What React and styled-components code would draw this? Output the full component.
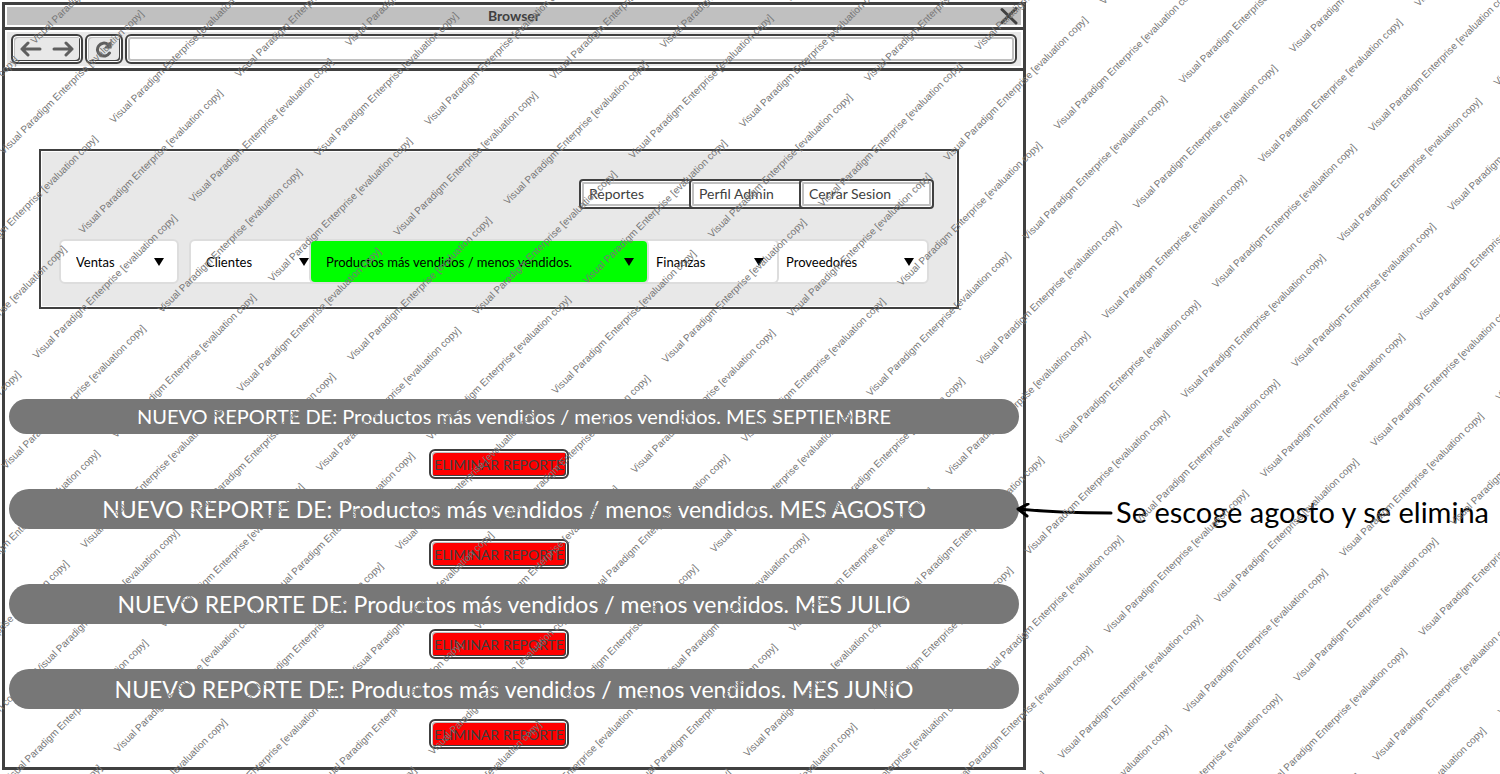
import React from 'react';
import styled, { createGlobalStyle } from 'styled-components';

const ink = '#404040';
const silver = '#c0c0c0';
const panelGrey = '#e8e8e8';
const barGrey = '#777777';
const hand = '"Comic Sans MS", Lato, sans-serif';

const GlobalStyle = createGlobalStyle`
  *, *::before, *::after { box-sizing: border-box; }
  body { margin: 0; background: #fff; font-family: ${hand}; }
`;

const Page = styled.div`
  position: relative;
  overflow: hidden;
  min-height: 100vh;
  padding: 2px 474px 4px 2px;
`;

const BrowserWindow = styled.main`
  border: 3px solid ${ink};
  background: #fff;
`;

const TitleBar = styled.header`
  padding: 2px;
  border-bottom: 3px solid ${ink};
`;

const TitleFill = styled.div`
  display: grid;
  grid-template-columns: 24px 1fr 24px;
  align-items: center;
  height: 18px;
  background: ${silver};
`;

const WindowTitle = styled.h1`
  grid-column: 2;
  margin: 0;
  font-size: 14px;
  line-height: 18px;
  font-weight: 700;
  text-align: center;
  color: ${ink};
`;

const CloseButton = styled.button`
  display: flex;
  justify-content: center;
  padding: 0;
  border: 0;
  background: none;
`;

const Toolbar = styled.div`
  padding: 2px;
  border-bottom: 3px solid ${ink};
`;

const ToolbarFill = styled.div`
  display: flex;
  gap: 2px;
  padding: 2px 4px;
  background: ${panelGrey};
`;

const ToolGroup = styled.div`
  display: flex;
  align-items: center;
  justify-content: center;
  width: ${(p) => p.$width}px;
  height: 30px;
  border: 2px solid ${ink};
  border-radius: 6px;
  background: ${panelGrey};
  box-shadow: inset 0 0 0 1px #fff, inset 2px 2px 0 ${silver}, inset -2px -2px 0 ${ink};
`;

const ToolButton = styled.button`
  display: flex;
  justify-content: center;
  width: 32px;
  padding: 0;
  border: 0;
  background: none;
`;

const Address = styled.input`
  flex: 1;
  min-width: 0;
  height: 30px;
  padding: 0 10px;
  border: 2px solid ${ink};
  border-radius: 6px;
  background: #fff;
  box-shadow: inset 0 0 0 1px #fff, inset 0 0 0 3px ${silver};
  font: 14px ${hand};
`;

const Content = styled.div`
  padding: 78px 4px 18px;
`;

const MenuPanel = styled.section`
  display: flex;
  flex-direction: column;
  gap: 30px;
  margin: 0 60px 90px 30px;
  padding: 28px 23px 23px 18px;
  border: 2px solid ${ink};
  background: ${panelGrey};
  box-shadow: inset 0 0 0 1px #fff;
`;

const AccountNav = styled.nav`
  display: flex;
  justify-content: flex-end;
`;

const AccountButton = styled.button`
  width: 135px;
  height: 30px;
  padding: 0 8px 2px;
  border: 2px solid ${ink};
  border-radius: 4px;
  background: #fff;
  box-shadow: inset 0 0 0 1px #fff, inset 0 0 0 3px ${silver};
  font: 14px ${hand};
  text-align: left;
  color: ${ink};

  & + & { margin-left: -25px; }
`;

const Filters = styled.div`
  display: flex;
`;

const FilterBox = styled.div`
  position: relative;
  z-index: ${(p) => p.$layer};
  flex: 0 1 ${(p) => p.$width}px;
  margin-right: ${(p) => p.$after}px;
`;

const FilterSelect = styled.select`
  appearance: none;
  display: block;
  width: 100%;
  height: 45px;
  padding: 0 20px 0 15px;
  border: 2px solid #dddddd;
  border-radius: 6px;
  background: ${(p) => (p.$active ? '#00ff00' : '#fff')};
  font: 13px ${hand};
  color: #000;
`;

const FilterArrow = styled.svg`
  position: absolute;
  top: 19px;
  right: 15px;
  pointer-events: none;
`;

const Report = styled.article`
  position: relative;
  display: flex;
  flex-direction: column;
  align-items: center;
  gap: ${(p) => p.$gap}px;
  margin-bottom: ${(p) => p.$after}px;
`;

const ReportTitle = styled.h2`
  width: 100%;
  margin: 0;
  border-radius: 20px;
  background: ${barGrey};
  font-size: ${(p) => (p.$compact ? 20 : 23)}px;
  line-height: ${(p) => (p.$compact ? 35 : 40)}px;
  font-weight: 400;
  text-align: center;
  color: #fff;
`;

const DeleteButton = styled.button`
  width: 140px;
  height: 30px;
  margin-right: 30px;
  padding: 0;
  border: 2px solid ${ink};
  border-radius: 6px;
  background: #ff0000;
  box-shadow: inset 0 0 0 1px #fff, inset 2px 2px 0 ${silver}, inset -2px -2px 0 ${ink};
  font: 14px ${hand};
  white-space: nowrap;
  color: ${ink};
`;

const Note = styled.aside`
  position: absolute;
  top: 3px;
  left: 100%;
  display: flex;
  align-items: center;
  gap: 3px;
  margin-left: -4px;
  font-size: 29px;
  line-height: 40px;
  white-space: nowrap;
  color: #000;
`;

const WatermarkLayer = styled.svg`
  position: absolute;
  inset: 0;
  width: 100%;
  height: 100%;
  pointer-events: none;
  z-index: 10;
  fill: ${barGrey};
  font: 10px "Liberation Sans", Arial, sans-serif;
`;

const filters = [
  { label: 'Ventas', width: 120, after: 10, layer: 1 },
  { label: 'Clientes', width: 135, after: -15, layer: 1 },
  { label: 'Productos más vendidos / menos vendidos.', width: 340, after: -10, layer: 3, active: true },
  { label: 'Finanzas', width: 140, after: -10, layer: 2 },
  { label: 'Proveedores', width: 160, after: 0, layer: 1 },
];

const reports = [
  { month: 'SEPTIEMBRE', compact: true, gap: 15, after: 10 },
  { month: 'AGOSTO', gap: 10, after: 15, note: 'Se escoge agosto y se elimina' },
  { month: 'JULIO', gap: 5, after: 10 },
  { month: 'JUNIO', gap: 10, after: 0 },
];

function Watermark() {
  const marks = [];
  for (let row = 0; row < 30; row += 1) {
    const start = row % 2 ? 214 : 335;
    for (let col = -4; col < 4; col += 1) {
      const u = start + col * 221;
      const v = row * 56;
      const x = (u + v) * Math.SQRT1_2;
      const y = (v - u) * Math.SQRT1_2;
      if (x > -150 && x < 1510 && y > -5 && y < 930) {
        marks.push(
          <text key={`${row}:${col}`} x={u} y={v}>Visual Paradigm Enterprise [evaluation copy]</text>
        );
      }
    }
  }
  return (
    <WatermarkLayer aria-hidden="true">
      <g transform="rotate(-45)">{marks}</g>
    </WatermarkLayer>
  );
}

export default function App() {
  return (
    <Page>
      <GlobalStyle />
      <BrowserWindow>
        <TitleBar>
          <TitleFill>
            <WindowTitle>Browser</WindowTitle>
            <CloseButton aria-label="Cerrar">
              <svg width="18" height="18" viewBox="0 0 18 18" fill="none" stroke={ink} strokeWidth="3" strokeLinecap="round">
                <path d="M2 2.500 16 16M16 1.500 2 15.500" />
              </svg>
            </CloseButton>
          </TitleFill>
        </TitleBar>
        <Toolbar>
          <ToolbarFill>
            <ToolGroup $width={72}>
              <ToolButton aria-label="Atrás">
                <svg width="22" height="16" viewBox="0 0 22 16" fill="none" stroke="#5f5f5f" strokeWidth="3" strokeLinecap="round" strokeLinejoin="round">
                  <path d="M20 8H2M8 2 2 8l6 6" />
                </svg>
              </ToolButton>
              <ToolButton aria-label="Adelante">
                <svg width="22" height="16" viewBox="0 0 22 16" fill="none" stroke="#5f5f5f" strokeWidth="3" strokeLinecap="round" strokeLinejoin="round">
                  <path d="M2 8h18M14 2l6 6-6 6" />
                </svg>
              </ToolButton>
            </ToolGroup>
            <ToolGroup $width={38}>
              <ToolButton aria-label="Recargar">
                <svg width="18" height="18" viewBox="0 0 18 18" fill="none" stroke="#5f5f5f" strokeWidth="3">
                  <path d="M14.500 13A6.500 6.500 0 1 1 13 4.500" strokeLinecap="round" />
                  <path d="M16.500 0.500v8H8.500z" fill="#5f5f5f" stroke="none" />
                </svg>
              </ToolButton>
            </ToolGroup>
            <Address type="text" aria-label="Dirección" />
          </ToolbarFill>
        </Toolbar>
        <Content>
          <MenuPanel>
            <AccountNav>
              <AccountButton>Reportes</AccountButton>
              <AccountButton>Perfil Admin</AccountButton>
              <AccountButton>Cerrar Sesion</AccountButton>
            </AccountNav>
            <Filters>
              {filters.map((f) => (
                <FilterBox key={f.label} $width={f.width} $after={f.after} $layer={f.layer}>
                  <FilterSelect aria-label={f.label} $active={f.active}>
                    <option>{f.label}</option>
                  </FilterSelect>
                  <FilterArrow width="10" height="8" viewBox="0 0 10 8">
                    <path d="M0 0h10L5 8z" />
                  </FilterArrow>
                </FilterBox>
              ))}
            </Filters>
          </MenuPanel>
          {reports.map((r) => (
            <Report key={r.month} $gap={r.gap} $after={r.after}>
              <ReportTitle $compact={r.compact}>
                NUEVO REPORTE DE: Productos más vendidos / menos vendidos. MES {r.month}
              </ReportTitle>
              <DeleteButton>ELIMINAR REPORTE</DeleteButton>
              {r.note && (
                <Note>
                  <svg width="98" height="18" viewBox="0 0 98 18" fill="none" stroke="#000" strokeWidth="3" strokeLinecap="round" strokeLinejoin="round">
                    <path d="M3 6Q45 10 96 10M13 1 3 6l9 7" />
                  </svg>
                  {r.note}
                </Note>
              )}
            </Report>
          ))}
        </Content>
      </BrowserWindow>
      <Watermark />
    </Page>
  );
}
